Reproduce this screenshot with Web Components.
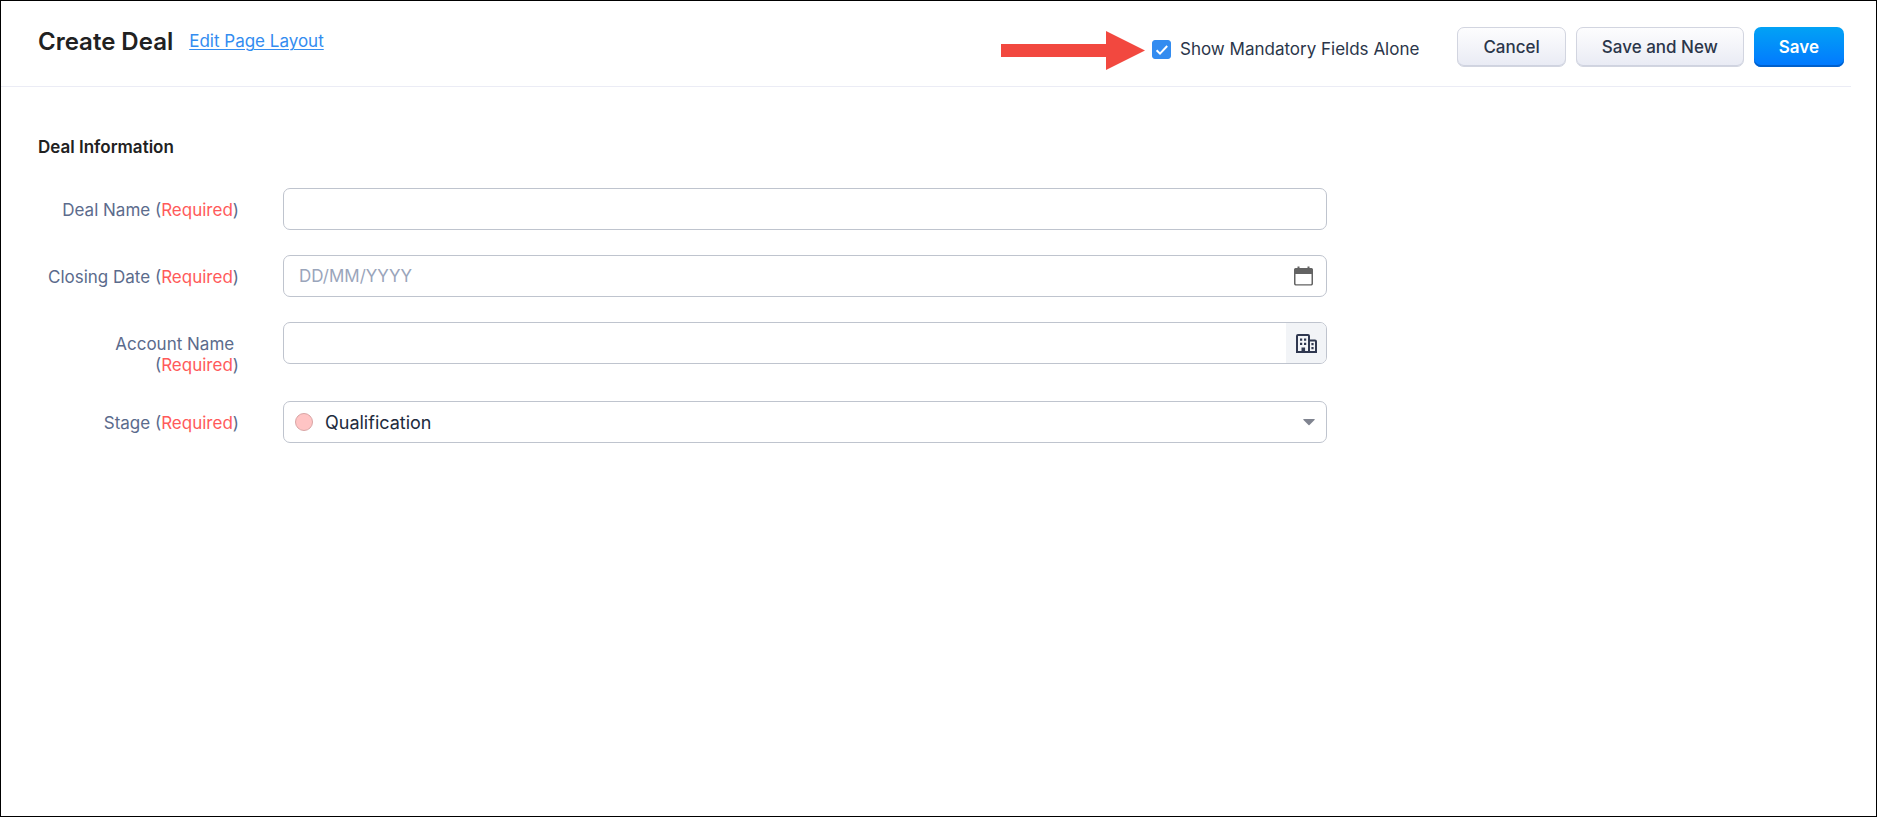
<!DOCTYPE html>
<html lang="en">
<head>
<meta charset="utf-8">
<meta name="viewport" content="width=device-width, initial-scale=1">
<title>Create Deal</title>
<style>
  html, body { margin: 0; height: 100%; background: #fff; }
  body { font: 17px/21px Inter, "Liberation Sans", sans-serif; color: #2b364a; }
</style>
</head>
<body>
<deal-page>
  <page-header slot="header" heading="Create Deal">
    <mandatory-toggle></mandatory-toggle>
    <action-button slot="actions">Cancel</action-button>
    <action-button slot="actions">Save and New</action-button>
    <action-button slot="actions" kind="primary">Save</action-button>
  </page-header>
  <form-section heading="Deal Information">
    <form-field label="Deal Name"></form-field>
    <form-field label="Closing Date" placeholder="DD/MM/YYYY" type="date"></form-field>
    <form-field label="Account Name" type="lookup"></form-field>
    <form-field label="Stage" type="stage" value="Qualification"></form-field>
  </form-section>
</deal-page>

<script>
class DealPage extends HTMLElement {
  constructor() {
    super();
    this.attachShadow({ mode: 'open' }).innerHTML = `
      <style>
        :host { display: block; box-sizing: border-box; min-height: 100%; border: 1px solid #000; background: #fff; }
        main { padding: 50px 37px 40px; }
      </style>
      <slot name="header"></slot>
      <main><slot></slot></main>`;
  }
}

class PageHeader extends HTMLElement {
  constructor() {
    super();
    this.attachShadow({ mode: 'open' }).innerHTML = `
      <style>
        :host { display: block; margin-right: 25px; }
        header { display: flex; align-items: flex-start; gap: 38px; padding: 26px 7px 16px 37px; border-bottom: 1px solid #ebecf5; }
        .title { display: flex; align-items: flex-start; gap: 16px; flex: 1; }
        h1 { margin: 0; font-size: 24px; line-height: 30px; font-weight: 600; color: #212121; white-space: nowrap; }
        a { line-height: 28px; color: #338cf0; text-decoration: underline; text-decoration-thickness: 1px; text-underline-offset: 2px; white-space: nowrap; }
        .actions { display: flex; gap: 10px; }
      </style>
      <header>
        <div class="title"><h1></h1><a href="#layout">Edit Page Layout</a></div>
        <slot></slot>
        <div class="actions"><slot name="actions"></slot></div>
      </header>`;
  }
  connectedCallback() { this.shadowRoot.querySelector('h1').textContent = this.getAttribute('heading'); }
}

class MandatoryToggle extends HTMLElement {
  constructor() {
    super();
    this.attachShadow({ mode: 'open' }).innerHTML = `
      <style>
        :host { display: flex; align-items: center; gap: 7px; padding-top: 4px; }
        svg { display: block; flex: none; }
        label { display: flex; align-items: center; gap: 9px; padding-bottom: 2px; white-space: nowrap; }
        .box { display: grid; flex: none; }
        .box > * { grid-area: 1 / 1; }
        input { appearance: none; width: 19px; height: 19px; margin: 0; border: 1px solid #b5bccb; border-radius: 3px; background: #fff; }
        input:checked { background: #338cf0; border-color: #338cf0; }
        .box svg { pointer-events: none; visibility: hidden; }
        input:checked + svg { visibility: visible; }
      </style>
      <svg width="144" height="39" viewBox="0 0 144 39" aria-hidden="true"><path d="M0 13H105V0L144 19.500L105 39V26H0Z" fill="#f2483f"/></svg>
      <label>
        <span class="box">
          <input type="checkbox" checked>
          <svg width="19" height="19" viewBox="0 0 19 19" aria-hidden="true"><path d="M4.600 10.200L8 13.600L15.200 6" fill="none" stroke="#fff" stroke-width="2"/></svg>
        </span>
        <span>Show Mandatory Fields Alone</span>
      </label>`;
  }
}

class ActionButton extends HTMLElement {
  constructor() {
    super();
    this.attachShadow({ mode: 'open' }).innerHTML = `
      <style>
        :host { display: block; }
        button { box-sizing: border-box; height: 40px; margin: 0; padding: 0 25px; border: 1px solid #d2d5e0; border-radius: 7px;
          background: linear-gradient(#fdfdfe, #e9ebf4); box-shadow: inset 0 -1px #cfd3e0; color: #2b364a;
          font: inherit; font-weight: 500; white-space: nowrap; cursor: pointer; }
        :host([kind="primary"]) button { border: 0; color: #fff; font-weight: 600;
          background: linear-gradient(#02a2f5, #0278ff); box-shadow: inset 0 -2px #0060cc; }
      </style>
      <button type="button"><slot></slot></button>`;
  }
}

class FormSection extends HTMLElement {
  constructor() {
    super();
    this.attachShadow({ mode: 'open' }).innerHTML = `
      <style>
        :host { display: block; }
        h2 { margin: 0 0 30px; font-size: 17px; line-height: 21px; font-weight: 600; color: #212121; }
        form { display: grid; gap: 25px; }
      </style>
      <h2></h2>
      <form><slot></slot></form>`;
  }
  connectedCallback() { this.shadowRoot.querySelector('h2').textContent = this.getAttribute('heading'); }
}

const CALENDAR = `<svg width="20" height="20" viewBox="0 0 20 20" aria-hidden="true">
  <path d="M3.500 0.500H5.500V2H13.500V0.500H15.500V2H17.500Q19 2 19 3.500V17.500Q19 19.500 17.500 19.500H1.500Q0 19.500 0 17.500V3.500Q0 2 1.500 2H3.500ZM1.500 8V17.500Q1.500 18.200 2.200 18.200H16.800Q17.500 18.200 17.500 17.500V8Z" fill="#636363" fill-rule="evenodd"/></svg>`;
const BUILDING = `<svg width="21" height="19" viewBox="0 0 21 19" aria-hidden="true">
  <path d="M1 18V2Q1 1 2 1H12Q13 1 13 2V18M13 6.500H19Q20 6.500 20 7.500V18M0 18H21" fill="none" stroke="#2f3850" stroke-width="2"/>
  <path d="M4 4.500h2.200v2.200H4zM8 4.500h2.200v2.200H8zM4 8.800h2.200V11H4zM8 8.800h2.200V11H8zM5.500 13.500h3.600V18H5.500zM15.400 9h2.200v2.200h-2.200zM15.400 13h2.200v2.200h-2.200z" fill="#2f3850"/></svg>`;

class FormField extends HTMLElement {
  constructor() {
    super();
    this.attachShadow({ mode: 'open' });
  }
  connectedCallback() {
    const type = this.getAttribute('type') || 'text';
    const control = type === 'stage'
      ? `<span class="dot"></span><select id="control"><option>${this.getAttribute('value')}</option></select>
         <svg class="caret" width="12" height="7" viewBox="0 0 12 7" aria-hidden="true"><path d="M0.500 0H11.500Q12 0.500 11.500 1L6.500 6Q6 6.500 5.500 6L0.500 1Q0 0.500 0.500 0Z" fill="#808490"/></svg>`
      : `<input id="control" type="text" required placeholder="${this.getAttribute('placeholder') || ''}">`
        + (type === 'date' ? `<button type="button" class="date" aria-label="Choose date">${CALENDAR}</button>` : '')
        + (type === 'lookup' ? `<button type="button" class="lookup" aria-label="Choose account">${BUILDING}</button>` : '');
    this.shadowRoot.innerHTML = `
      <style>
        :host { display: grid; grid-template-columns: 201px minmax(0, 1044px); column-gap: 44px; align-items: start; }
        label { padding-top: 12px; text-align: right; color: #5b6b8c; }
        label span { white-space: nowrap; }
        em { font-style: normal; color: #ff5a5a; }
        .control { box-sizing: border-box; display: flex; align-items: center; position: relative; height: 42px; border: 1px solid #bfc4ce; border-radius: 7px; background: #fff; overflow: hidden; }
        input { flex: 1; min-width: 0; height: 100%; box-sizing: border-box; margin: 0; padding: 0 15px; border: 0; outline: 0; background: none; font: inherit; color: #212b3d; }
        input::placeholder { color: #9aa5bb; opacity: 1; }
        button { display: flex; align-items: center; justify-content: center; flex: none; height: 100%; margin: 0; padding: 0; border: 0; background: none; cursor: pointer; }
        .date { width: 45px; }
        .lookup { width: 40px; background: #f2f4f7; }
        .dot { position: absolute; left: 11px; box-sizing: border-box; width: 18px; height: 18px; border: 1px solid #d9a5a5; border-radius: 50%; background: #ffc4c4; pointer-events: none; }
        select { appearance: none; flex: 1; width: 100%; height: 100%; margin: 0; padding: 0 34px 0 41px; border: 0; outline: 0; background: none; font: inherit; font-size: 18px; color: #212b3d; }
        .caret { position: absolute; right: 11px; pointer-events: none; }
      </style>
      <label for="control">${this.getAttribute('label')}&nbsp;<wbr><span>(<em>Required</em>)</span></label>
      <div class="control">${control}</div>`;
  }
}

customElements.define('deal-page', DealPage);
customElements.define('page-header', PageHeader);
customElements.define('mandatory-toggle', MandatoryToggle);
customElements.define('action-button', ActionButton);
customElements.define('form-section', FormSection);
customElements.define('form-field', FormField);
</script>
</body>
</html>
